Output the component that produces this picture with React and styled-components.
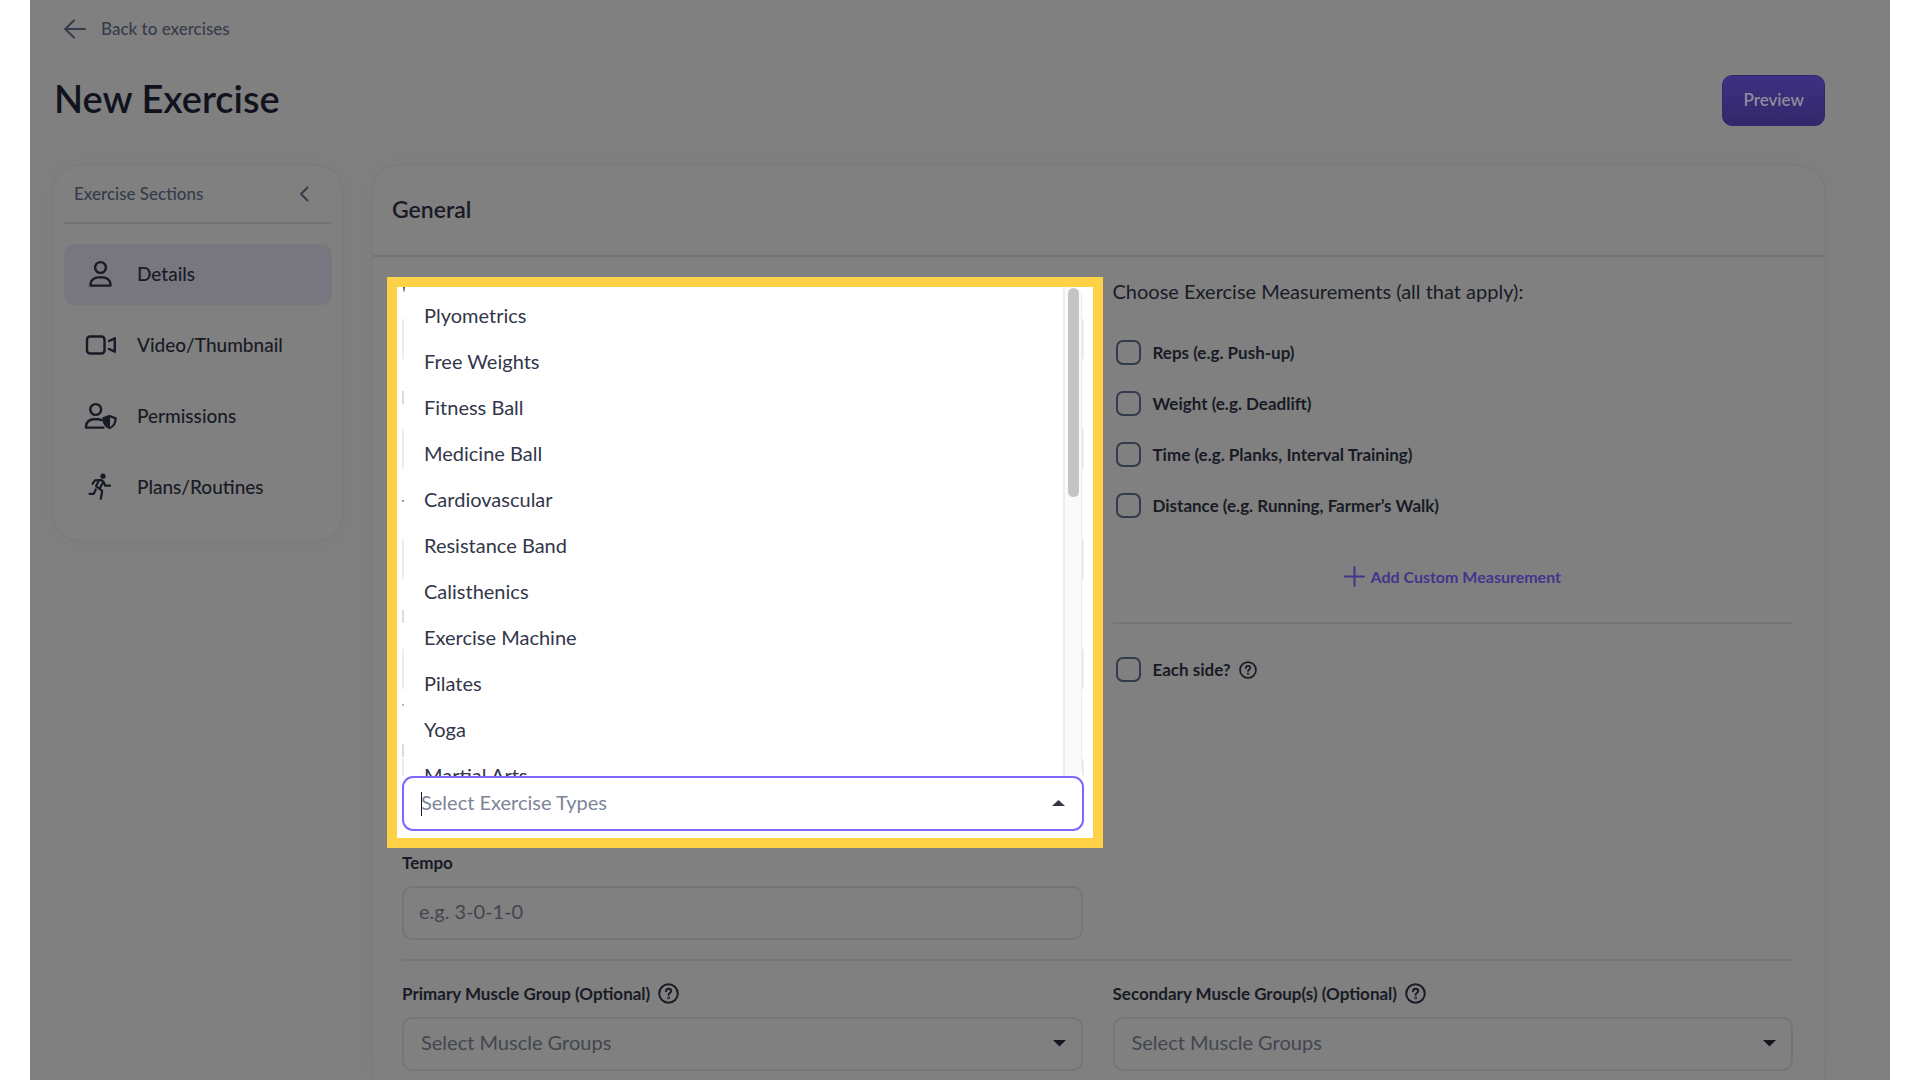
import React, { useState } from "react";
import styled, { createGlobalStyle } from "styled-components";

const GlobalStyle = createGlobalStyle`
  * { box-sizing: border-box; }
  body {
    margin: 0;
    background: #fff;
    font-family: Lato, "Open Sans", sans-serif;
    color: #181b25;
  }
  button, input, select { font-family: inherit; }
`;

const Shell = styled.div`
  height: 100vh;
  margin: 0 30px;
  padding: 14px 65px 0 23px;
  background: #808080;
  display: flex;
  flex-direction: column;
  overflow: hidden;
`;

const BackLink = styled.a`
  display: flex;
  align-items: center;
  align-self: flex-start;
  gap: 15px;
  padding-left: 11px;
  line-height: 30px;
  font-size: 17px;
  font-weight: 500;
  color: #363c4a;
  text-decoration: none;
`;

const TitleBar = styled.header`
  display: flex;
  justify-content: space-between;
  align-items: center;
  margin: 31px 0 39px;
`;

const Title = styled.h1`
  margin: 0 0 0 1px;
  padding-bottom: 5px;
  font-size: 38px;
  line-height: 46px;
  font-weight: 600;
  color: #10131d;
`;

const PreviewButton = styled.button`
  height: 51px;
  padding: 0 20px 2px;
  border: 1px solid #33286f;
  border-radius: 10px;
  background: linear-gradient(#3e3082, #32276a);
  color: #8f8c9c;
  font-size: 17px;
  font-weight: 600;
  cursor: pointer;
`;

const Content = styled.div`
  flex: 1;
  display: flex;
  align-items: flex-start;
  gap: 29px;
`;

const Panel = styled.section`
  border: 1px solid #7a7a7b;
  border-radius: 26px;
  background: #808080;
  box-shadow: 0 0 24px rgba(0, 0, 0, 0.03);
`;

const Sidebar = styled(Panel).attrs({ as: "nav" })`
  flex: 0 0 290px;
  padding: 0 10px 22px;
`;

const SidebarHead = styled.div`
  display: flex;
  align-items: center;
  justify-content: space-between;
  height: 58px;
  margin-bottom: 20px;
  padding: 0 23px 2px 10px;
  border-bottom: 2px solid #747476;
  color: #363c4a;
  font-size: 17px;
  font-weight: 500;
`;

const CollapseButton = styled.button`
  display: flex;
  padding: 2px 0 0;
  border: 0;
  background: none;
  color: inherit;
  cursor: pointer;
`;

const NavItem = styled.a`
  display: flex;
  align-items: center;
  gap: 18px;
  height: 61px;
  padding: 0 0 2px 19px;
  border-radius: 10px;
  background: ${(p) => (p.$active ? "#78767f" : "transparent")};
  color: #181b25;
  font-size: 19px;
  font-weight: 500;
  text-decoration: none;

  & + & {
    margin-top: 10px;
  }
`;

const MainPanel = styled(Panel)`
  flex: 1;
  align-self: stretch;
  border-bottom: 0;
  border-radius: 26px 26px 0 0;
`;

const PanelHead = styled.h2`
  margin: 0;
  height: 91px;
  padding-left: 19px;
  border-bottom: 2px solid #747476;
  line-height: 87px;
  font-size: 23px;
  font-weight: 600;
`;

const Columns = styled.div`
  display: grid;
  grid-template-columns: 1fr 1fr;
  column-gap: 30px;
  padding: 20px 31px 0 29px;
`;

const Highlight = styled.div`
  margin: 0 -20px 2px -15px;
  padding: 0 9px 7px 5px;
  border: 10px solid #ffd147;
  background: #fff;
`;

/* slivers of the fields that lie behind the open menu */
const MenuFrame = styled.div`
  height: 489px;
  padding: 0 2px;
  background:
    linear-gradient(#4a4d59, #c9cad0) 1px 0 / 2px 5px no-repeat,
    linear-gradient(#dcdcdf, #dcdcdf) 0 104px / 2px 13px no-repeat,
    linear-gradient(#9a9ba3, #9a9ba3) 0 213px / 2px 2px no-repeat,
    linear-gradient(#dcdcdf, #dcdcdf) 0 323px / 2px 13px no-repeat,
    linear-gradient(#b9bac1, #b9bac1) 0 417px / 2px 2px no-repeat,
    linear-gradient(#dcdcdf, #dcdcdf) 0 457px / 2px 13px no-repeat,
    linear-gradient(transparent 32px, #ececef 32px 72px, transparent 72px) 0 0 / 2px 110px repeat-y,
    linear-gradient(transparent 32px, #ececef 32px 72px, transparent 72px) 100% 0 / 2px 110px repeat-y,
    #fff;
`;

const Menu = styled.div`
  display: flex;
  height: 100%;
  background: #fff;
  border-radius: 8px;
  overflow: hidden;
`;

const Options = styled.ul`
  flex: 1;
  margin: 0;
  padding: 5px 0 0 20px;
  list-style: none;
`;

const Option = styled.li`
  line-height: 46px;
  font-size: 20px;
  color: #33364a;
  cursor: pointer;
`;

const ScrollTrack = styled.div`
  width: 19px;
  padding: 1px 3px 0 3px;
  border-left: 2px solid #ededed;
  border-right: 1px solid #ededed;
  background: #fafafa;
`;

const ScrollThumb = styled.div`
  width: 11px;
  height: 209px;
  border-radius: 6px;
  background: #c4c4c4;
`;

const Combo = styled.div`
  display: flex;
  align-items: center;
  height: 55px;
  padding: 0 17px;
  border: 2px solid #8066ff;
  border-radius: 11px;
  background: #fff;
  color: #33363f;
`;

const Cursor = styled.span`
  width: 1px;
  height: 24px;
  margin-right: -1px;
  background: #181b25;
`;

const ComboInput = styled.input`
  flex: 1;
  min-width: 0;
  padding: 0 0 4px;
  border: 0;
  outline: 0;
  background: none;
  font-size: 20px;

  &::placeholder {
    color: #7d8598;
    opacity: 1;
  }
`;

const Label = styled.label`
  display: flex;
  align-items: center;
  gap: 8px;
  height: 24px;
  margin-bottom: 12px;
  font-size: 17px;
  font-weight: 700;
`;

const TextInput = styled.input`
  width: 100%;
  height: 54px;
  padding: 0 15px 4px;
  border: 2px solid #757577;
  border-radius: 10px;
  background: transparent;
  font-size: 20px;

  &::placeholder {
    color: #42464f;
    opacity: 1;
  }
`;

const SelectBox = styled.div`
  display: grid;
  align-items: center;

  > * {
    grid-area: 1 / 1;
  }

  svg {
    justify-self: end;
    margin-right: 17px;
    pointer-events: none;
  }
`;

const Select = styled.select`
  appearance: none;
  width: 100%;
  height: 54px;
  padding: 0 17px 4px;
  border: 2px solid #757577;
  border-radius: 10px;
  background: transparent;
  color: #42464f;
  font-size: 20px;
`;

const Divider = styled.hr`
  grid-column: ${(p) => (p.$full ? "1 / -1" : "auto")};
  width: 100%;
  height: 2px;
  margin: ${(p) => (p.$full ? "19px 0 20px" : "31px 0 33px")};
  border: 0;
  background: #757577;
`;

const Measurements = styled.fieldset`
  min-width: 0;
  margin: 0;
  padding: 0;
  border: 0;
`;

const Legend = styled.legend`
  padding: 0;
  margin-bottom: 35px;
  line-height: 28px;
  font-size: 20px;
`;

const CheckRow = styled.div`
  display: flex;
  align-items: center;
  height: 25px;
  margin-left: 3px;
  gap: 8px;
  font-size: 17px;
  font-weight: 700;

  & + & {
    margin-top: 26px;
  }

  label {
    display: flex;
    align-items: center;
    gap: 12px;
  }
`;

const Checkbox = styled.input`
  appearance: none;
  width: 25px;
  height: 25px;
  margin: 0;
  border: 2px solid #333a49;
  border-radius: 7px;

  &:checked {
    background: #3e3082;
  }
`;

const AddButton = styled.button`
  display: flex;
  align-items: center;
  gap: 5px;
  height: 30px;
  margin: 43px auto 0;
  padding: 0;
  border: 0;
  background: none;
  color: #44348c;
  font-size: 16px;
  font-weight: 700;
  cursor: pointer;
`;

const Stroke = ({ width, height, box, children, weight = 2 }) => (
  <svg
    width={width}
    height={height}
    viewBox={box || `0 0 ${width} ${height}`}
    fill="none"
    stroke="currentColor"
    strokeWidth={weight}
    strokeLinecap="round"
    strokeLinejoin="round"
    aria-hidden="true"
  >
    {children}
  </svg>
);

const ArrowIcon = () => (
  <Stroke width={22} height={20}>
    <path d="M21 10H1M10 1.500L1.200 10l8.800 8.500" />
  </Stroke>
);

const ChevronIcon = () => (
  <Stroke width={10} height={16}>
    <path d="M8.500 1.500L2 8l6.500 6.500" />
  </Stroke>
);

const PersonIcon = () => (
  <Stroke width={36} height={28} weight={2.4}>
    <circle cx="17.500" cy="7.500" r="5.400" />
    <path d="M7.500 25.600v-1.200c0-4.200 3.600-7 8-7h4c4.400 0 8 2.800 8 7v1.200z" />
  </Stroke>
);

const VideoIcon = () => (
  <Stroke width={36} height={28} weight={2.4}>
    <rect x="4" y="5.500" width="17.500" height="17" rx="3" />
    <path d="M26 10l5.800-2.700v13.400L26 18" />
  </Stroke>
);

const PermissionIcon = () => (
  <Stroke width={36} height={28} weight={2.4}>
    <circle cx="12.700" cy="7.500" r="5.400" />
    <path d="M18.500 18.200c-1.200-.7-2.500-.9-3.800-.9H11c-4.500 0-8 2.900-8 7.100v1.200h17.500" />
    <path
      d="M26.500 12.800l7.200 2.700c.3 5.500-2.200 9.700-7.200 11.700-5-2-7.500-6.200-7.200-11.700z"
      fill="currentColor"
      stroke="none"
    />
    <path d="M27 15.500l4.400 1.600c0 3.600-1.400 6.400-4.400 7.900z" fill="#808080" stroke="none" />
  </Stroke>
);

const RunIcon = () => (
  <Stroke width={36} height={28} weight={2.2}>
    <circle cx="20" cy="3.200" r="2.600" fill="currentColor" stroke="none" />
    <path d="M9.500 10.800L12 7.300l6-.3 2.500 1.700 1.800 4H27" />
    <path d="M16 7.500l-3 5.700 6.200 4.600-1.400 8" />
    <path d="M20 9.500l-3 5.500M12.800 16.500l-2 4.300H6.500" />
  </Stroke>
);

const PlusIcon = () => (
  <Stroke width={21} height={21}>
    <path d="M10.500 1v19M1 10.500h19" />
  </Stroke>
);

const HelpIcon = ({ size = 21 }) => (
  <Stroke width={size} height={size} box="0 0 21 21">
    <circle cx="10.500" cy="10.500" r="9.300" />
    <path d="M8 8.300c0-1.500 1.100-2.500 2.600-2.500s2.600.9 2.600 2.300c0 1.800-2.600 1.900-2.600 3.700" />
    <circle cx="10.600" cy="14.900" r=".4" />
  </Stroke>
);

const Caret = ({ up }) => (
  <svg width="13" height="8" viewBox="0 0 13 8" fill={up ? "#33363f" : "#15181f"} aria-hidden="true">
    <path d={up ? "M6.500 0L13 6H0z" : "M0 0h13L6.500 6.500z"} />
  </svg>
);

const sections = [
  { name: "Details", icon: PersonIcon },
  { name: "Video/Thumbnail", icon: VideoIcon },
  { name: "Permissions", icon: PermissionIcon },
  { name: "Plans/Routines", icon: RunIcon },
];

const exerciseTypes = [
  "Plyometrics",
  "Free Weights",
  "Fitness Ball",
  "Medicine Ball",
  "Cardiovascular",
  "Resistance Band",
  "Calisthenics",
  "Exercise Machine",
  "Pilates",
  "Yoga",
  "Martial Arts",
];

const measurements = [
  { id: "reps", text: "Reps (e.g. Push-up)" },
  { id: "weight", text: "Weight (e.g. Deadlift)" },
  { id: "time", text: "Time (e.g. Planks, Interval Training)" },
  { id: "distance", text: "Distance (e.g. Running, Farmer’s Walk)" },
];

const MuscleSelect = ({ id, label }) => (
  <div>
    <Label htmlFor={id}>
      {label} <HelpIcon />
    </Label>
    <SelectBox>
      <Select id={id} defaultValue="">
        <option value="">Select Muscle Groups</option>
      </Select>
      <Caret />
    </SelectBox>
  </div>
);

const App = () => {
  const [active, setActive] = useState("Details");
  const [type, setType] = useState("");

  return (
    <>
      <GlobalStyle />
      <Shell>
        <BackLink href="#exercises">
          <ArrowIcon /> Back to exercises
        </BackLink>
        <TitleBar>
          <Title>New Exercise</Title>
          <PreviewButton type="button">Preview</PreviewButton>
        </TitleBar>

        <Content>
          <Sidebar>
            <SidebarHead>
              Exercise Sections
              <CollapseButton type="button" aria-label="Collapse sections">
                <ChevronIcon />
              </CollapseButton>
            </SidebarHead>
            {sections.map(({ name, icon: Icon }) => (
              <NavItem key={name} href="#section" $active={name === active} onClick={() => setActive(name)}>
                <Icon /> {name}
              </NavItem>
            ))}
          </Sidebar>

          <MainPanel>
            <PanelHead>General</PanelHead>
            <Columns>
              <div>
                <Highlight>
                  <MenuFrame>
                    <Menu>
                      <Options id="type-list" role="listbox" aria-label="Exercise types">
                        {exerciseTypes.map((name) => (
                          <Option key={name} role="option" aria-selected={name === type} onClick={() => setType(name)}>
                            {name}
                          </Option>
                        ))}
                      </Options>
                      <ScrollTrack>
                        <ScrollThumb />
                      </ScrollTrack>
                    </Menu>
                  </MenuFrame>
                  <Combo>
                    <Cursor />
                    <ComboInput
                      role="combobox"
                      aria-expanded="true"
                      aria-controls="type-list"
                      aria-label="Exercise types"
                      placeholder="Select Exercise Types"
                      value={type}
                      onChange={(e) => setType(e.target.value)}
                    />
                    <Caret up />
                  </Combo>
                </Highlight>
                <Label htmlFor="tempo">Tempo</Label>
                <TextInput id="tempo" placeholder="e.g. 3-0-1-0" />
              </div>

              <div>
                <Measurements>
                  <Legend>Choose Exercise Measurements (all that apply):</Legend>
                  {measurements.map(({ id, text }) => (
                    <CheckRow key={id}>
                      <label htmlFor={id}>
                        <Checkbox type="checkbox" id={id} />
                        {text}
                      </label>
                    </CheckRow>
                  ))}
                </Measurements>
                <AddButton type="button">
                  <PlusIcon /> Add Custom Measurement
                </AddButton>
                <Divider />
                <CheckRow>
                  <label htmlFor="each-side">
                    <Checkbox type="checkbox" id="each-side" />
                    Each side?
                  </label>
                  <HelpIcon size={18} />
                </CheckRow>
              </div>

              <Divider $full />
              <MuscleSelect id="primary" label="Primary Muscle Group (Optional)" />
              <MuscleSelect id="secondary" label="Secondary Muscle Group(s) (Optional)" />
            </Columns>
          </MainPanel>
        </Content>
      </Shell>
    </>
  );
};

export default App;
